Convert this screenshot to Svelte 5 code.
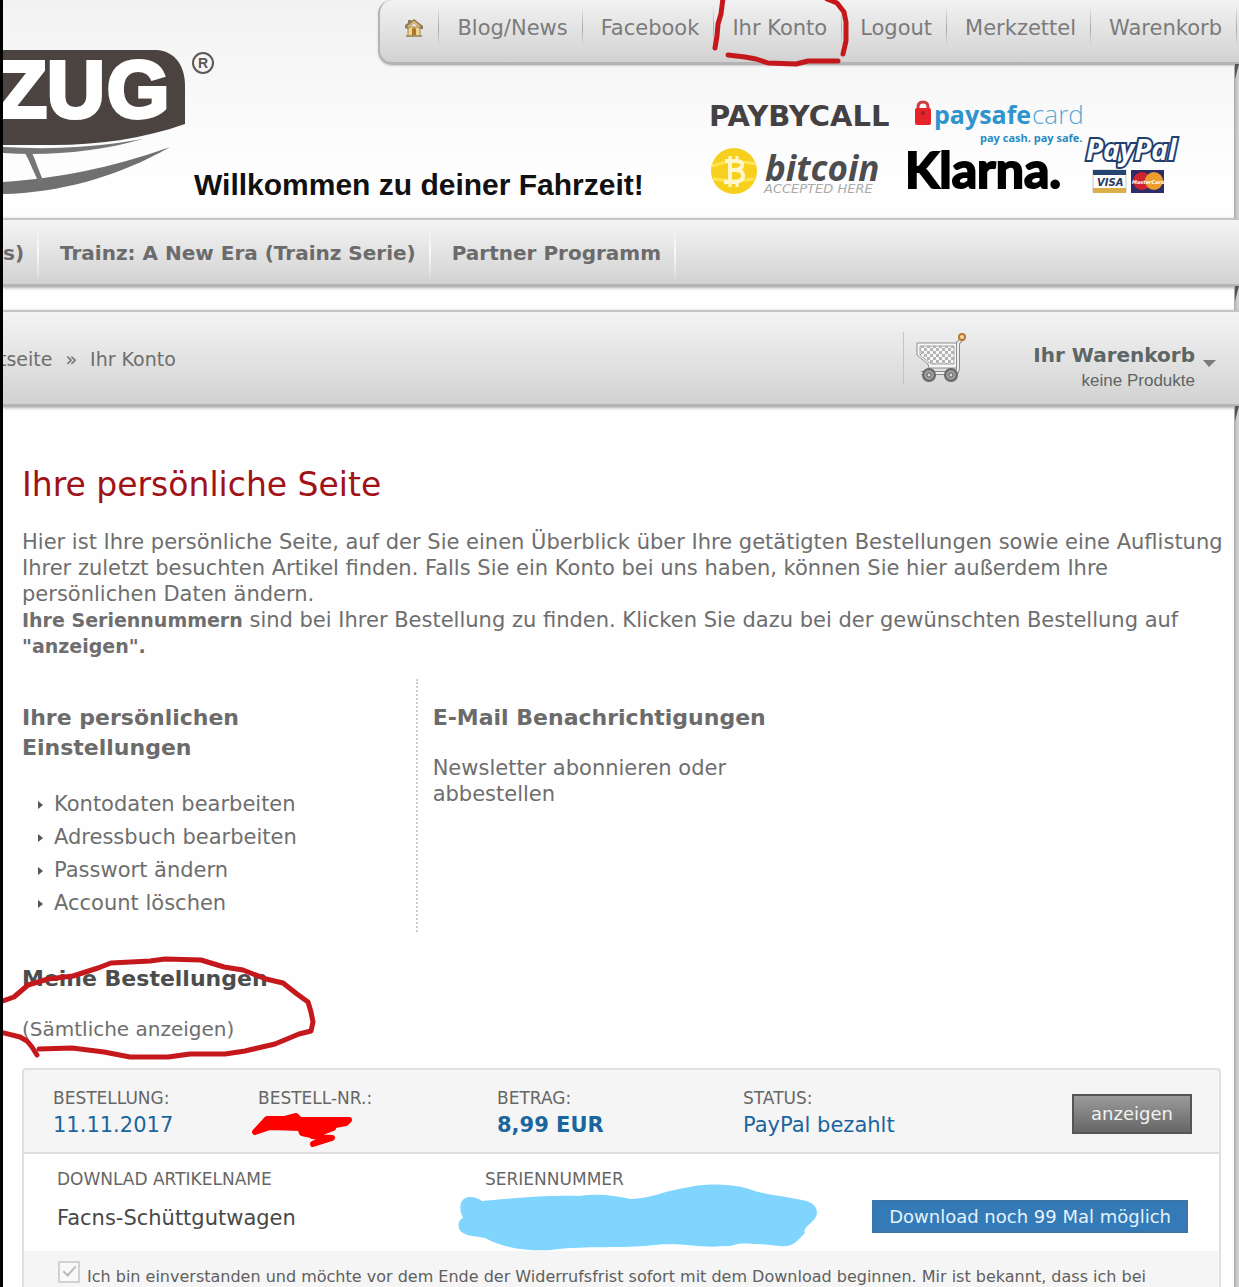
<script>
  const topLinks = ["Blog/News", "Facebook", "Ihr Konto", "Logout", "Merkzettel", "Warenkorb"];
  const categories = ["s)", "Trainz: A New Era (Trainz Serie)", "Partner Programm"];
  const settings = [
    "Kontodaten bearbeiten",
    "Adressbuch bearbeiten",
    "Passwort ändern",
    "Account löschen",
  ];

  let accepted = true;
</script>

<div class="page">
  <div class="sheet">
    <header class="header">
      <svg class="logo" viewBox="0 0 216 218" role="img" aria-label="ZUG">
        <path d="M0 50H153C173 51 182 67 182 86V124C140 139 93 145 51 145H0Z" fill="#4a4340" />
        <text x="-5 44 104" y="117" font-size="80" font-weight="bold" fill="#fff" stroke="#fff" stroke-width="4">ZUG</text>
        <path d="M0 147C50 150 95 147 140 139C95 152 45 156 0 153Z" fill="#767676" />
        <path d="M0 182C55 178 105 169 167 147C115 177 55 193 0 194Z" fill="#707070" />
        <path d="M22 153C27 162 31 173 36 183L40 180C35 169 33 161 29 153Z" fill="#767676" />
        <circle cx="200" cy="63" r="10" fill="none" stroke="#5c5856" stroke-width="2" />
        <text x="195" y="68" font-size="14" font-weight="bold" fill="#5c5856">R</text>
      </svg>

      <nav class="topnav">
        <a class="home" href="#home" aria-label="Startseite">
          <svg width="20" height="20" viewBox="0 0 20 20">
            <path d="M4 9H16V18H4Z" fill="#efd58e" stroke="#a98748" />
            <path d="M1 10V7L4 5V2H7V3L10 1L19 8V11H16L10 5L4 11Z" fill="#927b57" />
            <path d="M4 9L10 4L16 9" fill="none" stroke="#d9b978" stroke-width="2" />
            <path d="M8 18V11Q10 8 12 11V18Z" fill="#a9762b" />
            <path d="M2 18H18" stroke="#a79365" stroke-width="2" />
          </svg>
        </a>
        {#each topLinks as link}
          <div class="top-item">
            <a href="#top">{link}</a>
            {#if link === "Ihr Konto"}
              <svg class="mark-account" viewBox="708 0 145 70" aria-hidden="true">
                <path d="M722 -2L720 14L717 24L716 36L714 48" />
                <path d="M727 55L744 57L755 59L767 63L795 64L807 61L837 61" />
                <path d="M826 -1L836 3L843 12L845 22L845 41L842 54" />
              </svg>
            {/if}
          </div>
        {/each}
      </nav>

      <div class="welcome">
        <p class="slogan">Willkommen zu deiner Fahrzeit!</p>
        <svg class="payments" viewBox="0 0 470 98" role="img" aria-label="Zahlungsarten">
          <text x="-1" y="27" font-size="29" font-weight="bold" font-family="DejaVu Sans" fill="#454142">PAYBYCALL</text>
          <path d="M208 12V8Q208 3 213 3Q218 3 218 8V12" fill="none" stroke="#cd3e43" stroke-width="3" />
          <rect x="205" y="9" width="16" height="17" rx="2" fill="#e7232b" />
          <circle cx="213" cy="14" r="2" fill="#9e2229" />
          <text x="224" y="25" font-size="25" font-weight="bold" font-family="Open Sans" fill="#2e94cd">paysafe</text>
          <text x="322" y="25" font-size="26" font-family="Open Sans" font-weight="300" fill="#58a9d4">card</text>
          <text x="270" y="43" font-size="11" font-weight="bold" font-family="Open Sans" fill="#298bc1">pay cash. pay safe.</text>
          <circle cx="24" cy="72" r="23" fill="#f7cf1d" />
          <path d="M2 67Q23 59 46 65M3 80Q24 83 44 80" fill="none" stroke="#ffe454" stroke-width="3" />
          <g fill="none" stroke="#fff6c9" stroke-width="4">
            <path d="M15 62H26Q33 62 32 67Q31 71 24 71H19M24 71Q34 71 33 78Q32 83 24 83H14M20 62V83" />
            <path d="M20 57V62M27 57V62M20 83V88M27 83V88" stroke-width="3" />
          </g>
          <text x="55" y="82" font-size="35" font-weight="bold" font-style="italic" font-family="Open Sans" fill="#4d4d4f">bitcoin</text>
          <text x="54" y="94" font-size="13" font-style="italic" fill="#aaa">ACCEPTED HERE</text>
          <text x="195" y="89" font-size="50" font-weight="bold" font-family="Lato" fill="#000" stroke="#000" stroke-width="2">Klarna.</text>
          <text x="376" y="61" font-size="28" font-weight="bold" font-style="italic" fill="#fff" stroke="#213e70" stroke-width="4" paint-order="stroke" font-family="Open Sans">PayPal</text>
          <rect x="383" y="71" width="33" height="22" fill="#fff" stroke="#c7c7bf" />
          <path d="M383 71H416V76H383Z" fill="#24456f" />
          <path d="M383 89H416V94H383Z" fill="#dcad4b" />
          <text x="387" y="87" font-size="10" font-style="italic" font-weight="bold" fill="#24375e">VISA</text>
          <rect x="421" y="71" width="33" height="23" fill="#2e2d68" />
          <circle cx="432" cy="82" r="9" fill="#cf2431" />
          <circle cx="444" cy="82" r="9" fill="#eb9d2d" />
          <text x="422" y="85" font-size="5" font-style="italic" font-weight="bold" fill="#fff">MasterCard</text>
        </svg>
      </div>
    </header>

    <nav class="bar categories">
      {#each categories as category}
        <a href="#category">{category}</a>
      {/each}
    </nav>

    <div class="bar location">
      <nav class="crumbs">
        <a href="#start">tseite</a>
        <span>»</span>
        <a href="#account">Ihr Konto</a>
      </nav>
      <button class="cart" type="button">
        <svg class="cart-icon" width="52" height="50" viewBox="0 0 52 50" aria-hidden="true">
          <defs>
            <pattern id="mesh" width="6" height="6" patternUnits="userSpaceOnUse">
              <path d="M0 0H3V3H0ZM3 3H6V6H3Z" fill="#b5b5b5" />
            </pattern>
          </defs>
          <path d="M2 10H43V35H14L13 31L2 22Z" fill="#f7f7f7" stroke="#8d8d8d" />
          <path d="M5 13H39V31H16L5 22Z" fill="url(#mesh)" stroke="#a4a4a4" />
          <path d="M6 40H40Q43 39 43 35V10L48 5" fill="none" stroke="#8a8a8a" stroke-width="4" />
          <path d="M6 40H40Q43 39 43 35V10L48 5" fill="none" stroke="#eee" stroke-width="2" />
          <g fill="#999" stroke="#666" stroke-width="2">
            <circle cx="14" cy="42" r="6" />
            <circle cx="36" cy="42" r="6" />
          </g>
          <g fill="#ddd" stroke="#666">
            <circle cx="14" cy="42" r="2" />
            <circle cx="36" cy="42" r="2" />
          </g>
          <circle cx="47" cy="4" r="3" fill="#f4dcaa" stroke="#b87b2d" stroke-width="2" />
        </svg>
        <span class="cart-text">
          <strong>Ihr Warenkorb</strong>
          <span>keine Produkte</span>
        </span>
        <svg class="caret" width="13" height="7" viewBox="0 0 13 7" aria-hidden="true">
          <path d="M0 0H13L6 7Z" fill="#7c7c7c" />
        </svg>
      </button>
    </div>

    <main class="content">
      <h1>Ihre persönliche Seite</h1>
      <p class="intro">
        Hier ist Ihre persönliche Seite, auf der Sie einen Überblick über Ihre getätigten Bestellungen sowie eine Auflistung
        Ihrer zuletzt besuchten Artikel finden. Falls Sie ein Konto bei uns haben, können Sie hier außerdem Ihre
        persönlichen Daten ändern.<br />
        <strong>Ihre Seriennummern</strong> sind bei Ihrer Bestellung zu finden. Klicken Sie dazu bei der gewünschten Bestellung auf
        <strong>"anzeigen".</strong>
      </p>

      <div class="columns">
        <section>
          <h2>Ihre persönlichen Einstellungen</h2>
          <ul>
            {#each settings as item}
              <li><a href="#settings">{item}</a></li>
            {/each}
          </ul>
        </section>
        <section>
          <h2>E-Mail Benachrichtigungen</h2>
          <p><a href="#newsletter">Newsletter abonnieren oder abbestellen</a></p>
        </section>
      </div>

      <section class="orders-head">
        <h2>Meine Bestellungen</h2>
        <a href="#orders">(Sämtliche anzeigen)</a>
        <svg class="mark-orders" viewBox="3 955 315 105" aria-hidden="true">
          <path d="M0 1002L14 997L28 985L48 979L73 976L98 968L111 963L150 961L165 959L201 960L224 967L243 970L266 979L283 983L297 994L308 1002L311 1012L313 1022L311 1031L299 1034L275 1044L245 1051L225 1054L190 1054L168 1057L130 1057L104 1052L72 1048L39 1049" />
          <path d="M0 1032L20 1037L27 1041L32 1047L37 1055" />
        </svg>
      </section>

      <article class="order">
        <div class="order-head">
          <div><span class="label">BESTELLUNG:</span><span class="value">11.11.2017</span></div>
          <div>
            <span class="label">BESTELL-NR.:</span>
            <svg class="scribble" width="102" height="36" viewBox="251 1112 102 36" aria-hidden="true">
              <path d="M255 1132L267 1119H285L296 1116L300 1120H349L346 1123L330 1126L333 1128L312 1136L332 1138L313 1144L325 1138L302 1133L300 1128L270 1127Z" />
            </svg>
          </div>
          <div><span class="label">BETRAG:</span><strong class="value">8,99 EUR</strong></div>
          <div><span class="label">STATUS:</span><span class="value">PayPal bezahlt</span></div>
          <button class="show" type="button">anzeigen</button>
        </div>
        <div class="order-body">
          <div><span class="label">DOWNLAD ARTIKELNAME</span><span class="name">Facns-Schüttgutwagen</span></div>
          <div>
            <span class="label">SERIENNUMMER</span>
            <svg class="blot" width="360" height="68" viewBox="458 1184 360 68" aria-hidden="true">
              <path d="M482 1201C475 1196 464 1195 461 1203C459 1210 462 1215 463 1218C457 1220 457 1230 463 1233C470 1237 477 1236 485 1238C507 1250 533 1251 552 1250C574 1246 620 1248 646 1246C678 1241 703 1249 722 1246C739 1247 730 1242 754 1244C776 1244 787 1250 796 1242L805 1233C801 1228 817 1221 817 1213C817 1203 807 1201 802 1200C783 1196 765 1195 749 1189C729 1183 701 1184 690 1187C666 1190 650 1199 631 1199C606 1194 594 1194 579 1196C548 1195 514 1198 482 1201Z" />
            </svg>
          </div>
          <button class="download" type="button">Download noch 99 Mal möglich</button>
        </div>
        <label class="consent">
          <input type="checkbox" bind:checked={accepted} />
          <span>Ich bin einverstanden und möchte vor dem Ende der Widerrufsfrist sofort mit dem Download beginnen. Mir ist bekannt, dass ich bei</span>
        </label>
      </article>
    </main>
  </div>
</div>

<style>
  :global(body) {
    background: #d2d2d2;
    overflow: hidden;
  }
  .page {
    box-sizing: border-box;
    height: 100vh;
    overflow: hidden;
    border-left: 3px solid #000;
    font: 21px/26px "DejaVu Sans", Verdana, sans-serif;
    color: #6e6e6e;
  }
  .sheet {
    min-height: 100vh;
    margin-right: 5px;
    background: #fefefe;
    box-shadow: 0 0 4px #777;
  }
  a {
    color: inherit;
    text-decoration: none;
  }
  button {
    font: inherit;
    cursor: pointer;
  }
  h1,
  h2,
  p,
  ul {
    margin: 0;
    padding: 0;
  }

  .header {
    display: grid;
    grid-template-columns: 191px 1fr;
    grid-template-rows: 65px 153px;
    background: linear-gradient(#f2f2f2, #fefefe 80%);
  }
  .logo {
    grid-row: 1 / 3;
    width: 216px;
    height: 218px;
    font-family: "Liberation Sans", Arial, sans-serif;
  }
  .topnav {
    justify-self: end;
    display: flex;
    box-sizing: border-box;
    height: 65px;
    margin-right: -5px;
    padding-right: 2px;
    position: relative;
    border: solid #b4b4b4;
    border-width: 0 0 3px 2px;
    border-radius: 14px 0 0 14px;
    background: linear-gradient(#f2f2f2, #d2d2d2);
    box-shadow: 0 1px 2px #ccc;
    color: #7b7b7b;
  }
  .home,
  .top-item {
    display: flex;
    align-items: center;
    padding: 0 14px 6px 18px;
    border-right: 1px solid;
    border-image: linear-gradient(transparent 10%, #aaa 45%, transparent 75%) 1;
  }
  .home {
    padding-left: 24px;
  }
  .top-item {
    position: relative;
  }
  .mark-account {
    position: absolute;
    top: 0;
    left: -5px;
    z-index: 1;
    width: 145px;
    height: 70px;
  }
  .mark-account path,
  .mark-orders path {
    fill: none;
    stroke: #c5181c;
    stroke-width: 5;
    stroke-linecap: round;
    stroke-linejoin: round;
  }
  .welcome {
    display: flex;
    justify-content: space-between;
    align-items: flex-start;
    padding-right: 54px;
  }
  .slogan {
    padding-top: 104px;
    font: bold 30px/32px "Liberation Sans", Arial, sans-serif;
    color: #111;
    white-space: nowrap;
  }
  .payments {
    width: 470px;
    height: 98px;
    margin-top: 34px;
  }

  .bar {
    position: relative;
    display: flex;
    box-sizing: border-box;
    margin-right: -5px;
    border-top: 2px solid #c4c4c4;
    border-bottom: 3px solid #b4b4b4;
    background: linear-gradient(#f4f4f4, #d2d2d2);
    box-shadow: 0 1px 3px #aaa;
  }
  /* folded corner behind the right end of each bar */
  .topnav::after,
  .bar::after {
    content: "";
    position: absolute;
    top: 100%;
    right: 0;
    margin-top: 2px;
    border-top: 15px solid #555;
    border-right: 4px solid transparent;
  }
  .categories {
    height: 69px;
    margin-bottom: 23px;
    font-size: 20px;
    font-weight: bold;
    color: #6b6b6b;
  }
  .categories a {
    display: flex;
    align-items: center;
    padding: 2px 13px 0 21px;
    border-right: 2px solid;
    border-image: linear-gradient(transparent 10%, #fafafa 50%, transparent 95%) 1;
  }
  .categories a:first-child {
    padding-left: 0;
  }
  .location {
    justify-content: space-between;
    align-items: center;
    height: 97px;
  }
  .crumbs {
    display: flex;
    gap: 13px;
    margin-left: -4px;
    padding-top: 2px;
    font-size: 19px;
  }
  .cart {
    display: flex;
    align-items: center;
    height: 52px;
    padding: 0 23px 0 11px;
    border: 0;
    border-left: 1px solid #c4c4c4;
    background: none;
    color: #5c6664;
  }
  .cart-text {
    display: flex;
    flex-direction: column;
    align-items: flex-end;
    margin: 20px 8px 0 66px;
    font-size: 20px;
  }
  .cart-text span {
    font: 17px/26px "Liberation Sans", Arial, sans-serif;
  }
  .caret {
    margin-top: 10px;
  }

  .content {
    padding: 58px 13px 0 19px;
  }
  h1 {
    margin-bottom: 24px;
    font-size: 33px;
    line-height: 40px;
    font-weight: normal;
    color: #a01217;
  }
  h2 {
    font-size: 22px;
    line-height: 30px;
    color: #6b6b6b;
  }
  .intro {
    margin-right: -12px;
  }
  .intro strong {
    font-size: 19px;
  }
  .columns {
    display: flex;
    margin: 20px 0 32px;
  }
  .columns section {
    box-sizing: border-box;
    width: calc(33% - 2px);
    padding: 24px 14px 12px 0;
  }
  .columns section + section {
    padding-left: 15px;
    border-left: 2px dotted #ccc;
  }
  .columns p {
    margin-top: 22px;
  }
  ul {
    margin-top: 25px;
    list-style: none;
    line-height: 33px;
  }
  li {
    display: flex;
    align-items: center;
    gap: 11px;
    padding-left: 16px;
  }
  li::before {
    content: "";
    border: 4px solid transparent;
    border-left: 5px solid #555;
    border-right: 0;
  }
  .orders-head {
    position: relative;
    display: flex;
    flex-direction: column;
    align-items: flex-start;
    gap: 22px;
    margin-bottom: 26px;
  }
  .orders-head h2 {
    color: #4c4c4c;
  }
  .orders-head a {
    font-size: 20px;
  }
  .mark-orders {
    position: absolute;
    top: -9px;
    left: -19px;
    width: 315px;
    height: 105px;
  }

  .order {
    border: 2px solid #e0e0e0;
    border-radius: 4px;
    background: #f5f5f5;
  }
  .order-head {
    display: grid;
    grid-template-columns: 205px 239px 246px 1fr auto;
    padding: 17px 27px 12px 29px;
    border-bottom: 2px solid #dedede;
  }
  .order-head div,
  .order-body div {
    display: flex;
    flex-direction: column;
    position: relative;
  }
  .label {
    font-size: 17px;
    line-height: 23px;
    color: #666;
  }
  .value {
    line-height: 30px;
    color: #1b659f;
  }
  .scribble {
    position: absolute;
    top: 25px;
    left: -7px;
    fill: #f00;
    stroke: #f00;
    stroke-width: 6;
    stroke-linecap: round;
    stroke-linejoin: round;
  }
  .show {
    align-self: center;
    width: 120px;
    height: 40px;
    padding: 0;
    border: 2px solid #555;
    background: linear-gradient(#9b9b9b, #666);
    font-size: 18px;
    color: #f2f2f2;
  }
  .order-body {
    display: grid;
    grid-template-columns: 428px 1fr auto;
    padding: 14px 31px 18px 33px;
    background: #fff;
  }
  .name {
    margin-top: 12px;
    line-height: 30px;
    color: #484848;
  }
  .blot {
    position: absolute;
    top: 16px;
    left: -27px;
    fill: #80d5ff;
  }
  .download {
    align-self: end;
    height: 33px;
    padding: 0 15px;
    border: 2px solid #3c75a8;
    background: #337ab7;
    font-size: 18px;
    line-height: 26px;
    color: #e4f3fc;
  }
  .consent {
    display: flex;
    align-items: flex-start;
    gap: 7px;
    padding: 10px 12px 20px 34px;
    font-size: 16px;
    line-height: 32px;
    color: #606060;
    white-space: nowrap;
  }
  .consent input {
    flex: none;
    appearance: none;
    width: 22px;
    height: 22px;
    margin: 0;
    border: 2px solid #d2d2d2;
    background: #f9f9f9;
  }
  .consent input:checked::after {
    content: "";
    display: block;
    width: 5px;
    height: 11px;
    margin: 0 auto;
    border: solid #bbb;
    border-width: 0 2px 2px 0;
    transform: rotate(42deg);
  }
</style>
